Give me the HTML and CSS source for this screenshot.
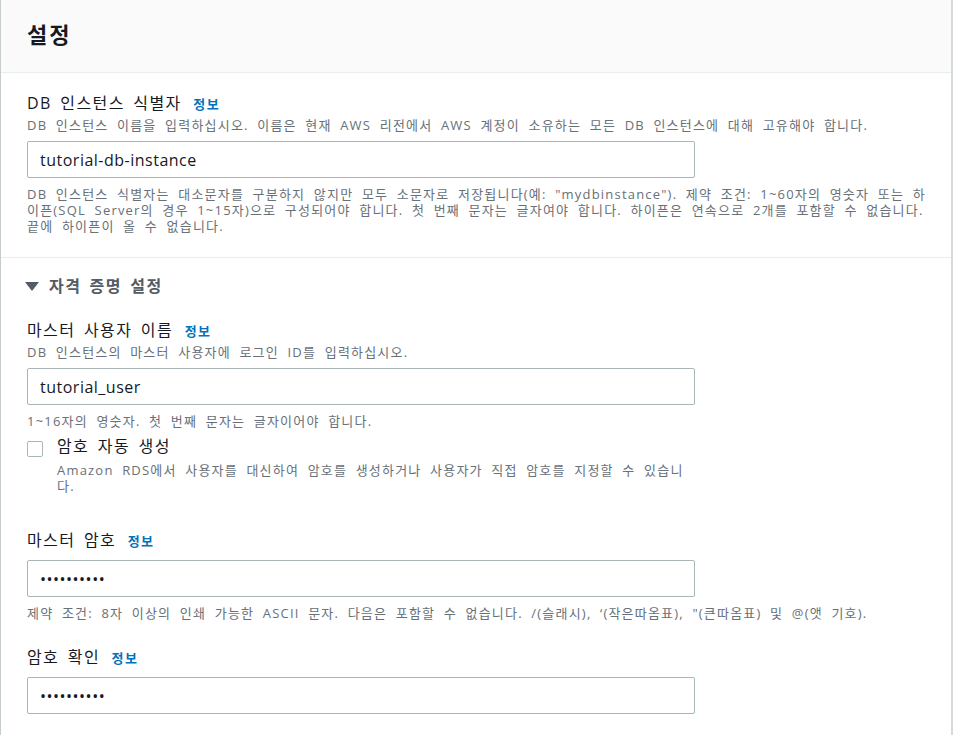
FILE: index.html
```html
<!DOCTYPE html>
<html lang="ko">
<head>
    <meta charset="UTF-8">
    <meta name="viewport" content="width=device-width, initial-scale=1.0">
    <title>설정</title>
    <link rel="stylesheet" href="styles.css">
</head>
<body>
    <div class="panel">
        <div class="panel-header">
            <h2>설정</h2>
        </div>

        <div class="panel-body">
            <div class="field">
                <label class="field-label">DB 인스턴스 식별자 <a href="#" class="info">정보</a></label>
                <p class="field-desc">DB 인스턴스 이름을 입력하십시오. 이름은 현재 AWS 리전에서 AWS 계정이 소유하는 모든 DB 인스턴스에 대해 고유해야 합니다.</p>
                <input class="text-input" type="text" value="tutorial-db-instance">
                <p class="field-help">DB 인스턴스 식별자는 대소문자를 구분하지 않지만 모두 소문자로 저장됩니다(예: "mydbinstance"). 제약 조건: 1~60자의 영숫자 또는 하이픈(SQL Server의 경우 1~15자)으로 구성되어야 합니다. 첫 번째 문자는 글자여야 합니다. 하이픈은 연속으로 2개를 포함할 수 없습니다. 끝에 하이픈이 올 수 없습니다.</p>
            </div>
        </div>

        <div class="expander">
            <div class="expander-title">
                <span class="caret"></span>
                <span>자격 증명 설정</span>
            </div>

            <div class="field field-tight">
                <label class="field-label">마스터 사용자 이름 <a href="#" class="info">정보</a></label>
                <p class="field-desc">DB 인스턴스의 마스터 사용자에 로그인 ID를 입력하십시오.</p>
                <input class="text-input" type="text" value="tutorial_user">
                <p class="field-help">1~16자의 영숫자. 첫 번째 문자는 글자이어야 합니다.</p>
            </div>

            <div class="check-row">
                <span class="checkbox"></span>
                <div class="check-text">
                    <div class="check-label">암호 자동 생성</div>
                    <p class="check-desc">Amazon RDS에서 사용자를 대신하여 암호를 생성하거나 사용자가 직접 암호를 지정할 수 있습니다.</p>
                </div>
            </div>

            <div class="field field-gap">
                <label class="field-label">마스터 암호 <a href="#" class="info">정보</a></label>
                <input class="text-input" type="password" value="tutorial12">
                <p class="field-help">제약 조건: 8자 이상의 인쇄 가능한 ASCII 문자. 다음은 포함할 수 없습니다. /(슬래시), ‘(작은따옴표), "(큰따옴표) 및 @(앳 기호).</p>
            </div>

            <div class="field">
                <label class="field-label">암호 확인 <a href="#" class="info">정보</a></label>
                <input class="text-input" type="password" value="tutorial12">
            </div>
        </div>
    </div>
</body>
</html>
```

FILE: styles.css
```css
* {
    margin: 0;
    padding: 0;
    box-sizing: border-box;
    font-family: "Open Sans", "Noto Sans CJK KR", sans-serif;
}

body {
    background-color: #fff;
    color: #16191f;
}

.panel {
    width: 953px;
    min-height: 735px;
    border-left: 1px solid #c6cccc;
    border-right: 2px solid #d5dbdb;
}

.panel-header {
    background-color: #fafafa;
    border-bottom: 1px solid #eaeded;
    height: 73px;
    padding: 19px 26px 0;
}

.panel-header h2 {
    font-size: 22px;
    font-weight: 700;
    line-height: 30px;
    letter-spacing: 2px;
}

.panel-body {
    padding: 19px 24px 23px 26px;
    border-bottom: 1px solid #eaeded;
}

.field {
    margin-bottom: 25px;
}

.panel-body .field {
    margin-bottom: 0;
}

.field-tight {
    margin-bottom: 6px;
}

.field-gap {
    margin-top: 35px;
}

.field-label {
    display: block;
    font-size: 16px;
    line-height: 22px;
    letter-spacing: 1.4px;
    word-spacing: 3px;
    color: #16191f;
}

.field-label + .text-input {
    margin-top: 9px;
}

.info {
    margin-left: 3px;
    font-size: 13px;
    line-height: 1;
    font-weight: 700;
    color: #0073bb;
    text-decoration: none;
}

.field-desc {
    font-size: 13px;
    line-height: 18px;
    letter-spacing: 1.2px;
    word-spacing: 4px;
    color: #687078;
    margin: 2px 0 7px;
}

.text-input {
    display: block;
    width: 668px;
    height: 37px;
    padding: 0 12px;
    border: 1px solid #aab7b8;
    border-radius: 2px;
    font-size: 16px;
    letter-spacing: 0.5px;
    color: #16191f;
    background: #fff;
}

.field-help {
    font-size: 13px;
    line-height: 16px;
    letter-spacing: 1.2px;
    word-spacing: 4px;
    color: #687078;
    margin-top: 8px;
}

.expander {
    padding: 15px 24px 0 26px;
}

.expander-title {
    display: flex;
    align-items: center;
    gap: 10px;
    font-size: 16px;
    font-weight: 700;
    letter-spacing: 1.5px;
    word-spacing: 2.5px;
    color: #545b64;
    line-height: 26px;
    margin-bottom: 20px;
}

.caret {
    width: 0;
    height: 0;
    margin-left: -2px;
    border-left: 7.5px solid transparent;
    border-right: 7.5px solid transparent;
    border-top: 9px solid #545b64;
}

.check-row {
    display: flex;
    gap: 14px;
}

.checkbox {
    flex: none;
    width: 16px;
    height: 16px;
    margin-top: 6px;
    border: 1px solid #aab7b8;
    border-radius: 2px;
}

.check-label {
    font-size: 16px;
    line-height: 22px;
    letter-spacing: 1.4px;
    word-spacing: 3px;
}

.check-desc {
    width: 640px;
    margin-top: 5px;
    font-size: 13px;
    line-height: 16px;
    letter-spacing: 1.2px;
    word-spacing: 4px;
    color: #687078;
}
```
